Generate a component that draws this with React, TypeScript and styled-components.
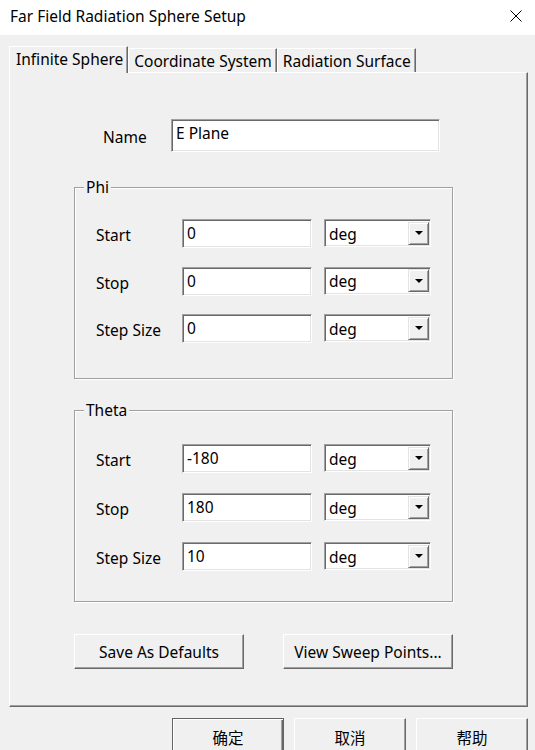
import React from "react";
import styled, { createGlobalStyle } from "styled-components";

const GlobalStyle = createGlobalStyle`
  html, body {
    margin: 0;
    padding: 0;
    background: #f0f0f0;
  }
  body {
    font-family: "Noto Sans", "Noto Sans CJK SC", sans-serif;
    font-size: 15.5px;
    color: #000;
  }
`;

const Window = styled.div`
  width: 535px;
  height: 750px;
  overflow: hidden;
  display: flex;
  flex-direction: column;
  background: #f0f0f0;
`;

const TitleBar = styled.div`
  height: 35px;
  flex: none;
  background: #fff;
  display: flex;
  align-items: center;
  justify-content: space-between;
  padding: 0 13px 0 10px;
`;

const Title = styled.span`
  font-size: 15.5px;
  margin-top: -3px;
`;

const CloseBox = styled.div`
  width: 12px;
  height: 12px;
  display: flex;
  margin-top: -3px;
`;

const Body = styled.div`
  display: flex;
  flex-direction: column;
  padding: 11px 7px 0 9px;
`;

const TabStrip = styled.div`
  display: flex;
  align-items: flex-end;
  height: 26px;
`;

const Tab = styled.div<{ $active?: boolean }>`
  position: relative;
  z-index: ${(p) => (p.$active ? 2 : 1)};
  height: ${(p) => (p.$active ? "27px" : "24px")};
  margin-bottom: ${(p) => (p.$active ? "-1px" : "0")};
  box-sizing: border-box;
  padding: ${(p) => (p.$active ? "0 4px 3px 6px" : "0 4px 0 5px")};
  display: flex;
  align-items: center;
  background: #f0f0f0;
  border-top: 1px solid #fff;
  border-left: 1px solid #fff;
  border-right: 1px solid #696969;
  box-shadow: inset -1px 0 0 #a0a0a0;
  white-space: nowrap;
`;

const Panel = styled.div`
  height: 635px;
  box-sizing: border-box;
  border-style: solid;
  border-width: 1px;
  border-color: #fff #696969 #696969 #fff;
  box-shadow: inset -1px -1px 0 #a0a0a0;
  display: flex;
  flex-direction: column;
  padding: 46px 0 0 64px;
`;

const NameRow = styled.div`
  display: flex;
  align-items: center;
  padding-left: 29px;
`;

const NameLabel = styled.label`
  width: 68px;
  margin-top: 3px;
`;

const TextInput = styled.div<{ $w: number; $h: number }>`
  width: ${(p) => p.$w}px;
  height: ${(p) => p.$h}px;
  box-sizing: border-box;
  background: #fff;
  border-style: solid;
  border-width: 1px;
  border-color: #a0a0a0 #fff #fff #a0a0a0;
  box-shadow: inset 1px 1px 0 #696969, inset -1px -1px 0 #e3e3e3;
  padding: 2px 0 0 4px;
  line-height: 22px;
  white-space: nowrap;
`;

const Group = styled.fieldset<{ $top: number; $mt: number }>`
  width: 379px;
  height: 202px;
  box-sizing: border-box;
  margin: ${(p) => p.$mt}px 0 0 0;
  padding: ${(p) => p.$top}px 0 0 21px;
  border: 1px solid #a0a0a0;
  box-shadow: 1px 1px 0 #fff, inset 1px 1px 0 #fff;
  min-inline-size: 0;
`;

const Legend = styled.legend`
  margin-left: -12px;
  padding: 0 2px;
  line-height: 20px;
  background: #f0f0f0;
`;

const Rows = styled.div<{ $gap: number }>`
  display: grid;
  grid-template-columns: 74px 130px 107px;
  column-gap: 12px;
  row-gap: ${(p) => p.$gap}px;
  align-items: center;
`;

const RowLabel = styled.span`
  margin-top: 3px;
  white-space: nowrap;
`;

const Combo = styled.div`
  width: 107px;
  height: 28px;
  box-sizing: border-box;
  background: #fff;
  border-style: solid;
  border-width: 1px;
  border-color: #a0a0a0 #fff #fff #a0a0a0;
  box-shadow: inset 1px 1px 0 #696969, inset -1px -1px 0 #e3e3e3;
  display: flex;
  align-items: center;
  justify-content: space-between;
  padding: 1px 1px 1px 4px;
  align-self: start;
`;

const ComboText = styled.span`
  line-height: 22px;
  margin-top: 1px;
`;

const DropButton = styled.div`
  width: 21px;
  height: 23px;
  box-sizing: border-box;
  background: #f0f0f0;
  border-style: solid;
  border-width: 1px;
  border-color: #e3e3e3 #696969 #696969 #e3e3e3;
  box-shadow: inset 1px 1px 0 #fff, inset -1px -1px 0 #a0a0a0;
  display: flex;
  align-items: center;
  justify-content: center;
`;

const Arrow = styled.span`
  width: 0;
  height: 0;
  border-left: 4px solid transparent;
  border-right: 4px solid transparent;
  border-top: 4px solid #000;
`;

const ActionRow = styled.div`
  width: 379px;
  display: flex;
  justify-content: space-between;
  margin-top: 32px;
`;

const Button = styled.button<{ $w: number; $h: number; $default?: boolean }>`
  width: ${(p) => p.$w}px;
  height: ${(p) => p.$h}px;
  flex: none;
  box-sizing: border-box;
  font: inherit;
  color: #000;
  background: #f0f0f0;
  border-style: solid;
  border-width: 1px;
  border-color: ${(p) =>
    p.$default ? "#646464" : "#fff #696969 #696969 #fff"};
  box-shadow: ${(p) =>
    p.$default
      ? "inset 1px 1px 0 #fff, inset -1px -1px 0 #696969, inset -2px -2px 0 #a0a0a0"
      : "inset -1px -1px 0 #a0a0a0"};
  padding: 0;
  line-height: 20px;
  white-space: nowrap;
`;

const FooterRow = styled.div`
  display: flex;
  justify-content: flex-end;
  gap: 10px;
  margin-top: 11px;
`;

const units = ["Start", "Stop", "Step Size"];

function SweepGroup(props: {
  title: string;
  values: string[];
  top: number;
  gap: number;
  mt: number;
}) {
  return (
    <Group $top={props.top} $mt={props.mt}>
      <Legend>{props.title}</Legend>
      <Rows $gap={props.gap}>
        {units.map((label, i) => (
          <React.Fragment key={label}>
            <RowLabel>{label}</RowLabel>
            <TextInput $w={130} $h={29}>
              {props.values[i]}
            </TextInput>
            <Combo>
              <ComboText>deg</ComboText>
              <DropButton>
                <Arrow />
              </DropButton>
            </Combo>
          </React.Fragment>
        ))}
      </Rows>
    </Group>
  );
}

export default function App() {
  return (
    <Window>
      <GlobalStyle />
      <TitleBar>
        <Title>Far Field Radiation Sphere Setup</Title>
        <CloseBox>
          <svg width="12" height="12" viewBox="0 0 12 12">
            <path d="M0.5 0.5 L11.5 11.5 M11.5 0.5 L0.5 11.5" stroke="#000" strokeWidth="1" />
          </svg>
        </CloseBox>
      </TitleBar>
      <Body>
        <TabStrip>
          <Tab $active>Infinite Sphere</Tab>
          <Tab>Coordinate System</Tab>
          <Tab>Radiation Surface</Tab>
        </TabStrip>
        <Panel>
          <NameRow>
            <NameLabel>Name</NameLabel>
            <TextInput $w={269} $h={33}>
              E Plane
            </TextInput>
          </NameRow>
          <SweepGroup title="Phi" values={["0", "0", "0"]} top={22} gap={18.5} mt={25} />
          <SweepGroup title="Theta" values={["-180", "180", "10"]} top={24} gap={20} mt={21} />
          <ActionRow>
            <Button $w={170} $h={35}>Save As Defaults</Button>
            <Button $w={170} $h={35}>View Sweep Points...</Button>
          </ActionRow>
        </Panel>
        <FooterRow>
          <Button $w={112} $h={40} $default>
            确定
          </Button>
          <Button $w={112} $h={40}>
            取消
          </Button>
          <Button $w={112} $h={40}>
            帮助
          </Button>
        </FooterRow>
      </Body>
    </Window>
  );
}
